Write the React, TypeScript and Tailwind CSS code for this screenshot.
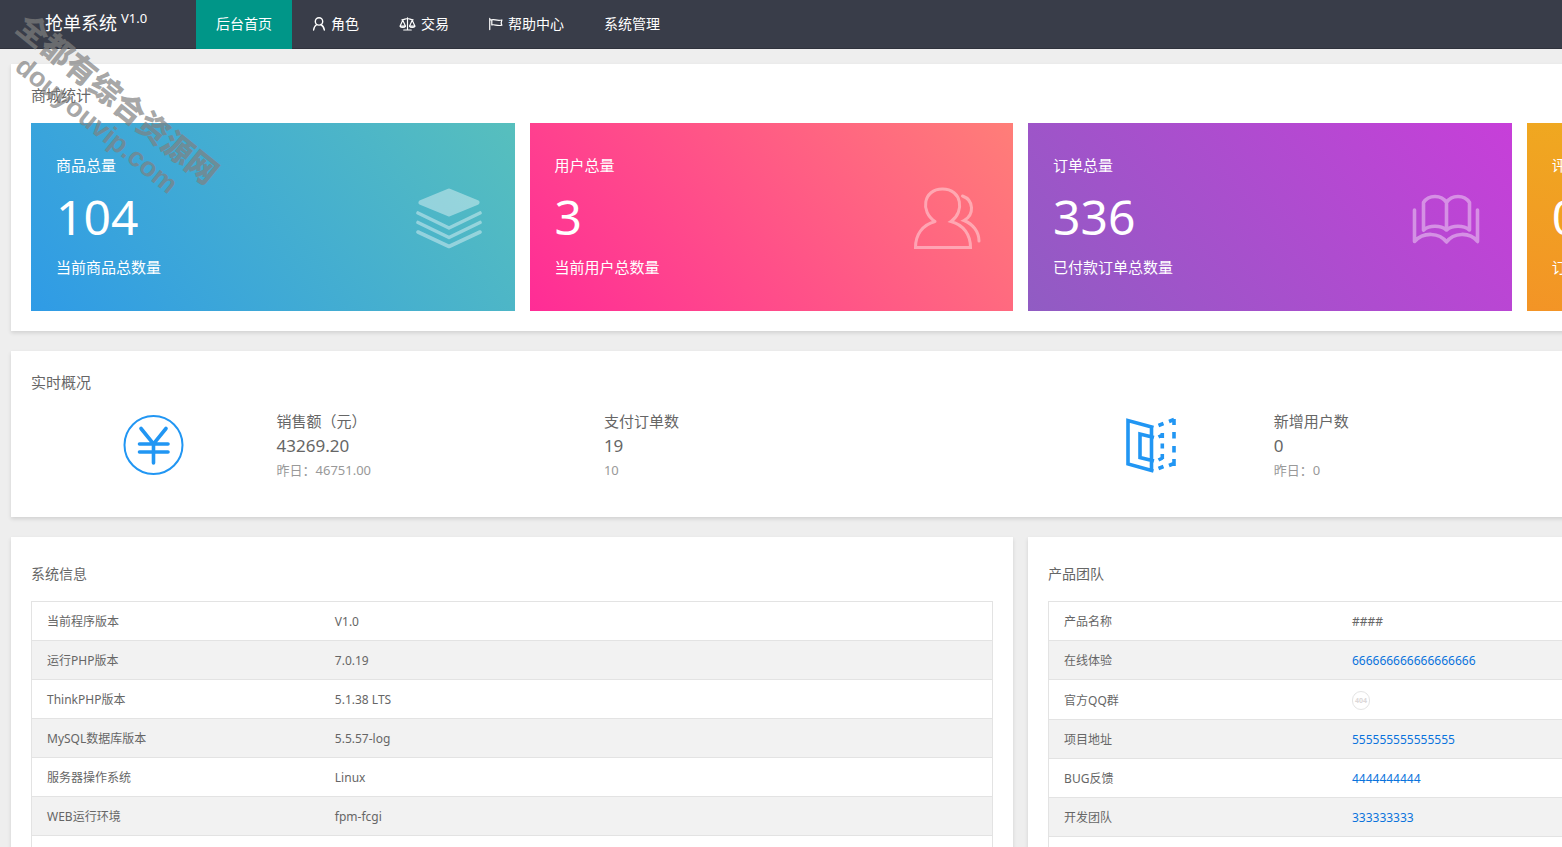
import type { ReactNode } from "react";

function UserIcon() {
  return (
    <svg viewBox="0 0 14 16" className="h-4 w-3.5 shrink-0 fill-none stroke-current" strokeWidth="1.4" strokeLinecap="round" aria-hidden="true">
      <circle cx="7" cy="5.400" r="3.700" />
      <path d="M4.800 8.500C2.900 9.600 1.900 11.500 1.600 14M8.800 8.500c2 1 3.100 2.900 3.600 5.500" />
    </svg>
  );
}

function ScalesIcon() {
  return (
    <svg viewBox="0 0 18 16" className="h-4 w-[17px] shrink-0 fill-none stroke-current" strokeWidth="1.2" strokeLinecap="round" strokeLinejoin="round" aria-hidden="true">
      <path d="M9 1.500v12.500M5 14.400h8M3 3.600c2.500 0 4-1.400 6-1.400s3.500 1.400 6 1.400" />
      <path d="M4 4 1.200 10.200h5.600zM14 4l-2.800 6.200h5.600z" />
      <path d="M1.200 10.400c.6 1.600 5 1.600 5.600 0M11.200 10.400c.6 1.600 5 1.600 5.600 0" />
    </svg>
  );
}

function FlagIcon() {
  return (
    <svg viewBox="1 0 15 16" className="h-4 w-3.5 shrink-0 fill-none stroke-current" strokeWidth="1.3" strokeLinecap="round" strokeLinejoin="round" aria-hidden="true">
      <path d="M1.800 2v12M4 3.500c3-1 5 1.400 10.800.2-1 2-1 3.500 0 5.600-5 1.200-7.800-1.300-10.800-.3zM1.800 3.500H4" />
    </svg>
  );
}

const cardIcon = "h-[62px] w-[68px] shrink-0 fill-none stroke-white opacity-40";

function LayersIcon() {
  return (
    <svg viewBox="0 0 68 62" className={cardIcon} strokeWidth="3.600" strokeLinecap="round" strokeLinejoin="round" aria-hidden="true">
      <path className="fill-white" strokeWidth="5" d="M34 4 62 15.500 34 27 6 15.500z" />
      <path d="M3 26l31 15 31-15M3 35.500l31 15 31-15M3 45l31 14.500L65 45" />
    </svg>
  );
}

function UsersIcon() {
  return (
    <svg viewBox="0 0 68 62" className={cardIcon} strokeWidth="3" strokeLinecap="round" aria-hidden="true">
      <path d="M22 34.500C7 25 10 2 29.500 2S52 25 38 34.500C51 38 57.500 48 57.500 60.500h-55C2.500 48 9 38 22 34.500" />
      <path d="M49.500 9C61 13 61.500 28 51 33.500 60 37 66 45 66 54" />
    </svg>
  );
}

function BookIcon() {
  return (
    <svg viewBox="0 0 68 62" className={cardIcon} strokeWidth="3.600" strokeLinecap="round" strokeLinejoin="round" aria-hidden="true">
      <path d="M11.500 43V15.500c5-8 18-8 23 0 5-8 18-8 23 0V43c-6-5-17-5-23 0-6-5-17-5-23 0zM34.500 15.500V43" />
      <path d="M2.500 23v31.500c9-10 25-9 32 .5 7-9.500 23-10.500 31-.5V23" />
    </svg>
  );
}

function CommentIcon() {
  return (
    <svg viewBox="0 0 68 62" className={cardIcon} strokeWidth="3.600" strokeLinejoin="round" aria-hidden="true">
      <path d="M4 6h60v40H36L22 58V46H4z" />
    </svg>
  );
}

function YenIcon() {
  return (
    <svg viewBox="0 0 62 62" className="h-[62px] w-[62px] fill-none stroke-[#2196f3]" strokeWidth="3.600" strokeLinecap="round" aria-hidden="true">
      <circle cx="30.500" cy="31" r="29" strokeWidth="2" />
      <path d="M18 14.500 30.500 30 43 14.500M30.500 30v19M16.500 30H45M16.500 38H45" />
    </svg>
  );
}

function FoldIcon() {
  return (
    <svg viewBox="0 0 62 62" className="h-[62px] w-[62px] fill-none stroke-[#2196f3]" strokeWidth="3.600" aria-hidden="true">
      <path d="M33.500 13.500 8 6.500v43.500l25.500 7M31.500 13v43M34 23.500 20 20v23.500l14 3.500" />
      <path d="M38.500 11.500l5-2M49 7.500l5-2M54 5v6M54 18v6.500M54 32v6.500M54 45v7M38.500 54.500l5-2M49 51.500l5-2M38.500 23l4-2M42.300 19v5M42.300 29.500v5M42.300 40v5M38.500 46l4-2" />
    </svg>
  );
}

const nav: { label: string; icon?: ReactNode }[] = [
  { label: "后台首页" },
  { label: "角色", icon: <UserIcon /> },
  { label: "交易", icon: <ScalesIcon /> },
  { label: "帮助中心", icon: <FlagIcon /> },
  { label: "系统管理" },
];

const cards = [
  { title: "商品总量", value: "104", note: "当前商品总数量", bg: "bg-[linear-gradient(50deg,#2f9be6,#57bfbd)]", icon: <LayersIcon /> },
  { title: "用户总量", value: "3", note: "当前用户总数量", bg: "bg-[linear-gradient(50deg,#ff2c96,#ff7e78)]", icon: <UsersIcon /> },
  { title: "订单总量", value: "336", note: "已付款订单总数量", bg: "bg-[linear-gradient(50deg,#905cc3,#c73fd9)]", icon: <BookIcon /> },
  { title: "评价总量", value: "0", note: "订单评价总数量", bg: "bg-[linear-gradient(10deg,#f39426,#eeb01e)]", icon: <CommentIcon /> },
];

const systemRows: [string, ReactNode][] = [
  ["当前程序版本", "V1.0"],
  ["运行PHP版本", "7.0.19"],
  ["ThinkPHP版本", "5.1.38 LTS"],
  ["MySQL数据库版本", "5.5.57-log"],
  ["服务器操作系统", "Linux"],
  ["WEB运行环境", "fpm-fcgi"],
  ["上传限制", "50M"],
];

function TextLink({ children }: { children: string }) {
  return <a href="#" className="text-[#0a73dc]">{children}</a>;
}

const teamRows: [string, ReactNode][] = [
  ["产品名称", "####"],
  ["在线体验", <TextLink>666666666666666666</TextLink>],
  [
    "官方QQ群",
    <a href="#" className="flex h-[19px] w-[18px] items-center justify-center rounded-full border border-[#e4e4e4] text-[7px] font-bold text-[#dcd8d8]">
      404
    </a>,
  ],
  ["项目地址", <TextLink>555555555555555</TextLink>],
  ["BUG反馈", <TextLink>4444444444</TextLink>],
  ["开发团队", <TextLink>333333333</TextLink>],
  ["版权所有", "####"],
];

const panel = "bg-white px-5 shadow-[0_2px_4px_rgba(0,0,0,0.12)]";

function InfoPanel({ title, rows }: { title: string; rows: [string, ReactNode][] }) {
  return (
    <section className={`${panel} pt-[25px] pb-5`}>
      <h2 className="text-sm leading-6">{title}</h2>
      <table className="mt-[15px] w-full table-fixed border-collapse text-xs leading-[18px]">
        <tbody>
          {rows.map(([name, value]) => (
            <tr key={name} className="even:bg-[#f2f2f2]">
              <th scope="row" className="w-[30%] border-y border-l border-[#e3e3e3] px-[15px] pt-[11px] pb-[9px] text-left font-normal">{name}</th>
              <td className="border-y border-r border-[#e3e3e3] px-[15px] pt-[11px] pb-[9px]">{value}</td>
            </tr>
          ))}
        </tbody>
      </table>
    </section>
  );
}

function Metric({ label, value, note }: { label: string; value: string; note: string }) {
  return (
    <div>
      <p className="text-[15px] leading-[23px]">{label}</p>
      <p className="text-[17px] leading-[25px]">{value}</p>
      <p className="text-[13px] leading-6 text-[#999]">{note}</p>
    </div>
  );
}

export default function App() {
  return (
    <div className="relative h-screen overflow-hidden bg-[#eee] font-['Noto_Sans','Noto_Sans_CJK_SC',sans-serif] text-[#666]">
      <header className="flex h-[49px] border-b border-[#2f323c] bg-[#393d49] text-white">
        <h1 className="flex w-[196px] shrink-0 gap-1 pl-[45px] text-lg leading-[46px]">
          抢单系统
          <sup className="top-0 text-[13px] leading-9">V1.0</sup>
        </h1>
        <nav className="flex text-sm">
          {nav.map(({ label, icon }, i) => (
            <a key={label} href="#" className={`flex h-[49px] items-center gap-[5px] px-5 pb-0.5 ${i === 0 ? "bg-[#009688]" : ""}`}>
              {icon}
              {label}
            </a>
          ))}
        </nav>
      </header>

      <main className="flex w-[131%] flex-col gap-5 pt-[15px] pr-4 pl-[11px]">
        <section className={`${panel} pt-[19px] pb-5`}>
          <h2 className="text-[15px] leading-6">商城统计</h2>
          <div className="mt-4 grid grid-cols-4 gap-[15px]">
            {cards.map((card) => (
              <article key={card.title} className={`flex justify-between pt-8 pr-8 pb-[34px] pl-[25px] text-white ${card.bg}`}>
                <div>
                  <h3 className="text-[15px] leading-5">{card.title}</h3>
                  <p className="mt-3 text-5xl leading-[60px]">{card.value}</p>
                  <p className="mt-2.5 text-[15px] leading-5">{card.note}</p>
                </div>
                <div className="pt-8">{card.icon}</div>
              </article>
            ))}
          </div>
        </section>

        <section className={`${panel} pt-[19px] pb-[35px]`}>
          <h2 className="text-[15px] leading-6">实时概况</h2>
          <div className="mt-4 grid grid-cols-2 gap-[15px]">
            <div className="grid grid-cols-[3fr_4fr_5fr]">
              <div className="flex justify-center pt-1"><YenIcon /></div>
              <Metric label="销售额（元）" value="43269.20" note="昨日：46751.00" />
              <Metric label="支付订单数" value="19" note="10" />
            </div>
            <div className="grid grid-cols-[3fr_4fr_5fr]">
              <div className="flex justify-center pt-1"><FoldIcon /></div>
              <Metric label="新增用户数" value="0" note="昨日：0" />
            </div>
          </div>
        </section>

        <div className="grid grid-cols-2 gap-[15px]">
          <InfoPanel title="系统信息" rows={systemRows} />
          <InfoPanel title="产品团队" rows={teamRows} />
        </div>
      </main>

      <div className="pointer-events-none absolute top-[76px] -left-[18px] w-[252px] rotate-[39deg] text-center font-black whitespace-nowrap text-[#808080]/70">
        <p className="font-['Noto_Sans_CJK_SC',sans-serif] text-[31px] leading-9">全都有综合资源网</p>
        <p className="font-['Liberation_Sans',sans-serif] text-[27px] leading-[34px]">douyouvip.com</p>
      </div>
    </div>
  );
}
